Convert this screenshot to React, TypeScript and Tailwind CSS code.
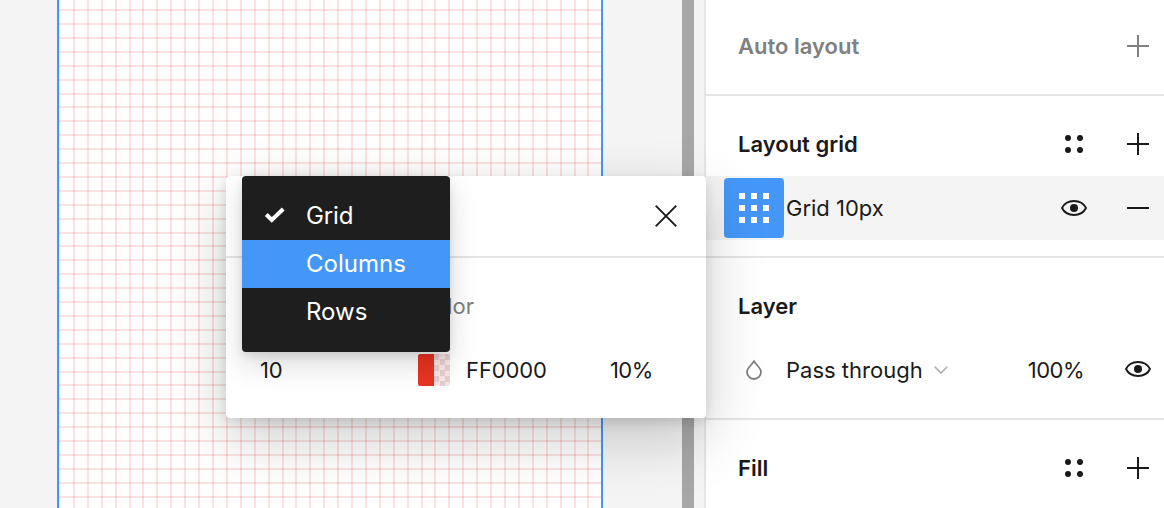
import type { ReactNode } from "react";

const columns = Array.from({ length: 39 }, (_, k) => Math.floor(59.56 + 13.904 * k) - 59);
const rows = Array.from({ length: 36 }, (_, k) => Math.floor(9.585 + 13.904 * k));

function GridLines() {
  return (
    <svg width="542" height="508" className="block" shapeRendering="crispEdges" fill="#e62e2e" fillOpacity="0.137">
      {columns.map((x, i) => (
        <rect key={x} x={x} y="0" width={i === 0 ? 1 : 2} height="508" />
      ))}
      {rows.map((y) => (
        <rect key={y} x="0" y={y} width="542" height="2" />
      ))}
    </svg>
  );
}

function Plus() {
  return (
    <svg width="22" height="22" viewBox="0 0 22 22" stroke="currentColor" strokeWidth="2" shapeRendering="crispEdges">
      <path d="M11 0V22M0 11H22" />
    </svg>
  );
}

function Minus() {
  return (
    <svg width="22" height="22" viewBox="0 0 22 22" stroke="currentColor" strokeWidth="2" shapeRendering="crispEdges">
      <path d="M0 11H22" />
    </svg>
  );
}

function Dots() {
  return (
    <svg width="18" height="18" viewBox="0 0 18 18" fill="currentColor">
      <circle cx="3" cy="3" r="3" />
      <circle cx="15" cy="3" r="3" />
      <circle cx="3" cy="15" r="3" />
      <circle cx="15" cy="15" r="3" />
    </svg>
  );
}

function Eye() {
  return (
    <svg width="26" height="16" viewBox="0 0 26 16" fill="none" stroke="currentColor" strokeWidth="1.9">
      <path d="M1 8C3.2 3.6 7.6 1 13 1s9.8 2.6 12 7c-2.200 4.400-6.600 7-12 7S3.200 12.400 1 8Z" strokeLinejoin="round" />
      <circle cx="13" cy="8" r="4" fill="currentColor" stroke="none" />
    </svg>
  );
}

function Icon({ children }: { children: ReactNode }) {
  return <span className="flex w-8 shrink-0 items-center justify-center">{children}</span>;
}

function Section({ title, muted, children }: { title: string; muted?: boolean; children: ReactNode }) {
  return (
    <div className={muted ? "flex h-16 items-center pl-8 pr-[10px] text-[#808080]" : "flex h-16 items-center pl-8 pr-[10px]"}>
      <span className="grow text-[22px] font-semibold">{title}</span>
      {children}
    </div>
  );
}

function Sidebar() {
  return (
    <aside className="flex w-[460px] shrink-0 flex-col border-l-2 border-[#e5e5e5] bg-white">
      <section className="h-24 border-b-2 border-[#e5e5e5] pt-[14px]">
        <Section title="Auto layout" muted>
          <Icon><Plus /></Icon>
        </Section>
      </section>
      <section className="h-[162px] border-b-2 border-[#e5e5e5] pt-4">
        <Section title="Layout grid">
          <div className="flex gap-8">
            <Icon><Dots /></Icon>
            <Icon><Plus /></Icon>
          </div>
        </Section>
        <div className="flex h-16 items-center bg-[#f4f4f4] pl-[18px] pr-[10px]">
          <div className="flex size-[60px] items-center justify-center rounded-[4px] bg-[#4597f7]">
            <div className="grid grid-cols-3 gap-[6px]">
              {Array.from({ length: 9 }, (_, i) => (
                <i key={i} className="size-[6px] bg-white" />
              ))}
            </div>
          </div>
          <span className="ml-[2px] grow">Grid 10px</span>
          <div className="flex gap-8">
            <Icon><Eye /></Icon>
            <Icon><Minus /></Icon>
          </div>
        </div>
      </section>
      <section className="h-[162px] border-b-2 border-[#e5e5e5] pt-4">
        <Section title="Layer">{null}</Section>
        <div className="flex h-16 items-center pl-8 pr-[10px]">
          <Icon>
            <svg width="16" height="20" viewBox="0 0 16 20" fill="none" stroke="#808080" strokeWidth="1.8">
              <path d="M8 1.300C6.300 4.200 1 8 1 12a7 7 0 0 0 14 0C15 8 9.700 4.200 8 1.300Z" />
            </svg>
          </Icon>
          <span className="ml-4">Pass through</span>
          <svg width="14" height="8" viewBox="0 0 14 8" className="ml-[11px]" fill="none" stroke="#b3b3b3" strokeWidth="1.700">
            <path d="M.7.7 7 7 13.300.7" />
          </svg>
          <span className="ml-auto mr-[38px] tracking-[-0.5px]">100%</span>
          <div className="pb-[2px]"><Icon><Eye /></Icon></div>
        </div>
      </section>
      <section className="pt-4">
        <Section title="Fill">
          <div className="flex gap-8">
            <Icon><Dots /></Icon>
            <Icon><Plus /></Icon>
          </div>
        </Section>
      </section>
    </aside>
  );
}

function Menu() {
  return (
    <div className="absolute left-4 top-0 h-44 w-52 rounded-[4px] bg-[#1e1e1e] pt-4 text-[24px] font-normal text-white shadow-[0_12px_30px_rgba(0,0,0,0.15),0_4px_8px_rgba(0,0,0,0.1)]">
      <div className="flex h-12 items-center pl-[22px]">
        <svg width="22" height="18" viewBox="0 0 22 18" className="mb-[2px]" fill="none" stroke="white" strokeWidth="4">
          <path d="m2.300 8.500 5.500 5.500L19.200 3" />
        </svg>
        <span className="ml-5 tracking-[-0.1px]">Grid</span>
      </div>
      <div className="flex h-12 items-center bg-[#4597f7] pl-16">Columns</div>
      <div className="flex h-12 items-center pl-16">Rows</div>
    </div>
  );
}

function GridSettings() {
  return (
    <div className="absolute left-[226px] top-[176px] h-[242px] w-[480px] rounded-[4px] bg-white shadow-[0_20px_60px_rgba(0,0,0,0.2),0_4px_12px_rgba(0,0,0,0.12)]">
      <div className="flex h-[82px] items-center justify-end border-b-2 border-[#e5e5e5] pr-[29px]">
        <svg width="22" height="22" viewBox="0 0 22 22" fill="none" stroke="currentColor" strokeWidth="1.900">
          <path d="m.7.7 20.600 20.600M21.300.7.7 21.300" />
        </svg>
      </div>
      <div className="flex h-16 items-end pl-[34px] text-[#808080]">
        <span className="w-[158px]">Size</span>
        <span>Color</span>
      </div>
      <div className="flex h-24 items-center pl-[34px] tracking-[-0.1px]">
        <span className="w-[158px]">10</span>
        <div className="flex size-8 overflow-hidden rounded-[2px]">
          <div className="w-4 bg-[#e93323]" />
          <div className="w-4 bg-[#fae5e4] bg-[repeating-conic-gradient(#fae5e4_0_25%,#e3cfce_0_50%)] bg-[length:11px_11px]" />
        </div>
        <span className="ml-4 w-36">FF0000</span>
        <span className="tracking-[-0.6px]">10%</span>
      </div>
      <Menu />
    </div>
  );
}

export default function App() {
  return (
    <main className="relative flex h-[508px] w-[1164px] overflow-hidden bg-[#f4f4f4] font-['Inter',sans-serif] text-[22px] leading-8 text-[#1a1a1a]">
      <div className="flex grow pl-[57px]">
        <div className="box-border w-[546px] border-x-2 border-[#4597f7] bg-white">
          <GridLines />
        </div>
      </div>
      <div className="mr-[10px] w-3 shrink-0 bg-[#a7a7a7]" />
      <Sidebar />
      <GridSettings />
    </main>
  );
}
